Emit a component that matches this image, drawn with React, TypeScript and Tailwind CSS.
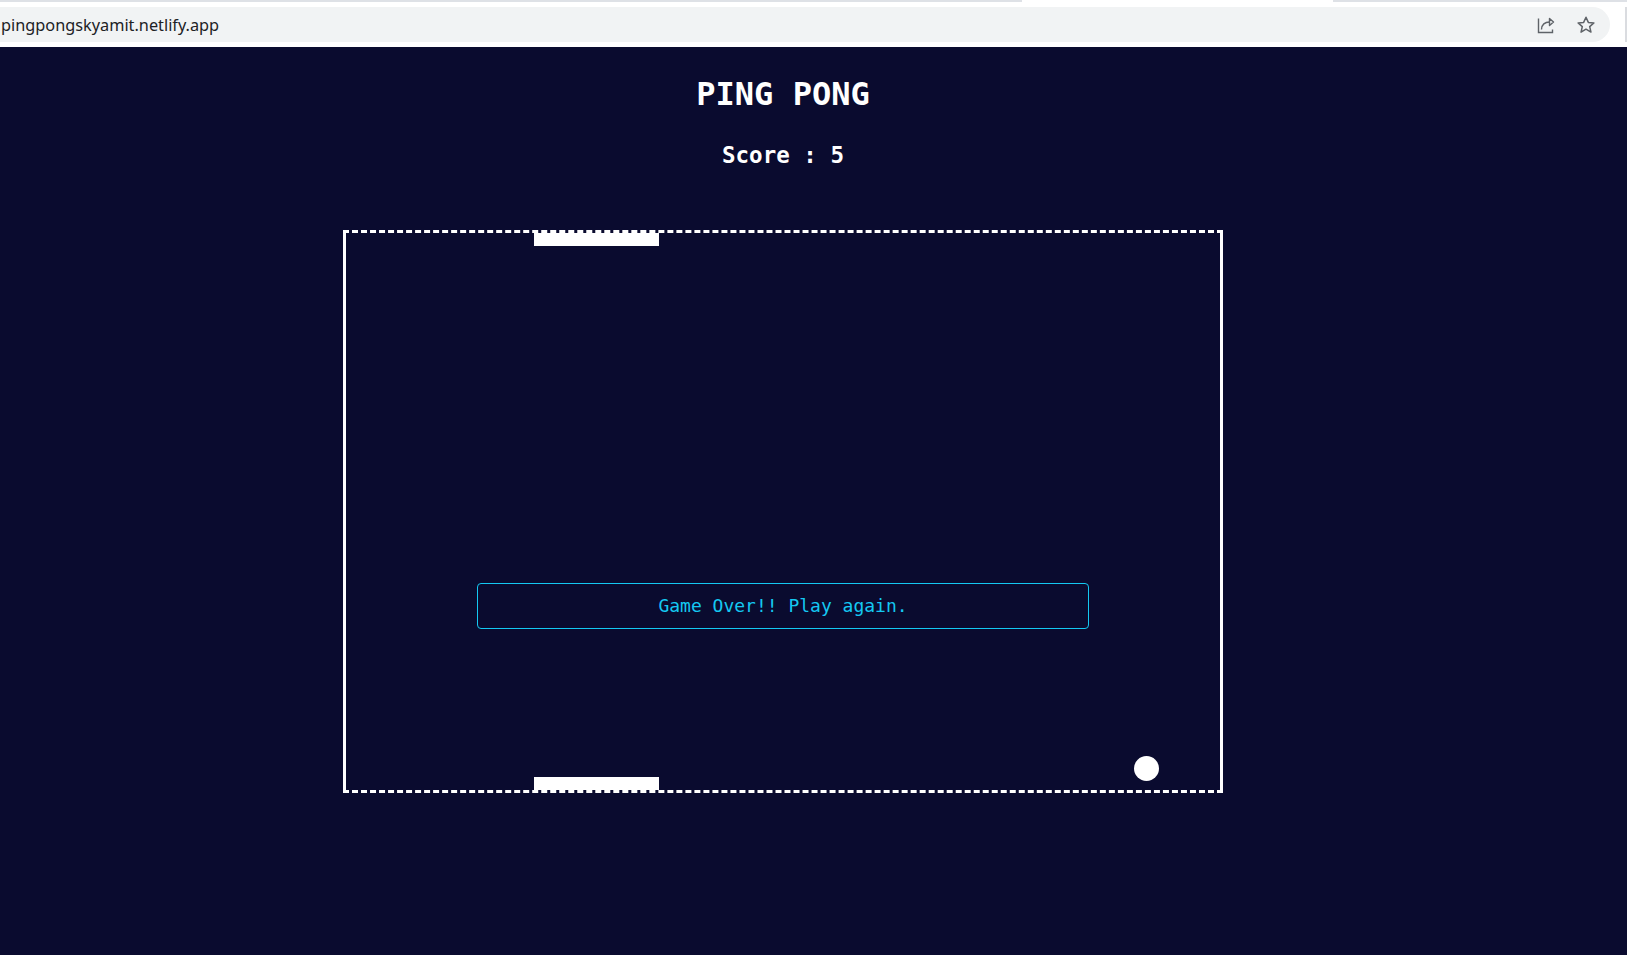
import React from "react";

function ShareIcon() {
	return (
		<svg width="20" height="20" viewBox="0 0 20 20" fill="none" stroke="#5f6368" strokeWidth="1.4">
			<path d="M2.5 3.5v14h14v-3" />
			<path d="M5.5 14.5c0-5 3.5-7.5 8-7.5" />
			<path d="M13.5 3.5l4 3.5-4 3.5z" strokeLinejoin="round" />
		</svg>
	);
}

function StarIcon() {
	return (
		<svg width="20" height="20" viewBox="0 0 20 20" fill="none" stroke="#5f6368" strokeWidth="1.5" strokeLinejoin="round">
			<path d="M10 2.2l2.35 5.2 5.55.5-4.2 3.7 1.25 5.5L10 14.2l-4.95 2.9 1.25-5.5-4.2-3.7 5.55-.5z" />
		</svg>
	);
}

function BrowserBar() {
	return (
		<div className="h-[47px] bg-white flex flex-col">
			<div className="h-[2px] flex">
				<div className="w-[1022px] bg-[#dee1e6]" />
				<div className="w-[311px] bg-white" />
				<div className="flex-1 bg-[#dee1e6]" />
			</div>
			<div className="flex items-center pt-[5px]">
				<div className="h-[35px] w-[1610px] bg-[#f1f3f4] rounded-r-full flex items-center justify-between pl-[1px] pr-[14px]">
					<span className="text-[16.3px] text-[#202124] font-['Noto_Sans',sans-serif] leading-none pt-[1px]">
						pingpongskyamit.netlify.app
					</span>
					<div className="flex items-center gap-[20px]">
						<ShareIcon />
						<StarIcon />
					</div>
				</div>
				<div className="ml-[15px] w-[2px] h-[35px] bg-[#dadce0]" />
			</div>
		</div>
	);
}

export default function App() {
	return (
		<div className="min-h-screen bg-[#0a0b2f] flex flex-col font-['DejaVu_Sans_Mono',monospace]">
			<BrowserBar />
			<main className="flex-1 flex flex-col items-center pr-[61px] text-white">
				<h1 className="mt-[31px] text-[32px] leading-none font-bold">PING PONG</h1>
				<h2 className="mt-[34px] text-[22.5px] leading-none font-bold">Score : 5</h2>

				{/* board */}
				<div className="mt-[63px] w-[880px] h-[563px] relative border-[3px] border-white border-dashed [border-left-style:solid] [border-right-style:solid]">
					<div className="absolute top-0 left-[188px] w-[125px] h-[13px] bg-white" />
					<div className="absolute bottom-0 left-[188px] w-[125px] h-[13px] bg-white" />
					<div className="absolute left-[788px] top-[523px] w-[25px] h-[25px] rounded-full bg-white" />

					<button className="absolute left-[131px] top-[350px] w-[612px] h-[46px] border border-[#14c8f2] rounded-[4px] text-[#14c8f2] text-[18px] font-['DejaVu_Sans_Mono',monospace] bg-transparent">
						Game Over!! Play again.
					</button>
				</div>
			</main>
		</div>
	);
}
